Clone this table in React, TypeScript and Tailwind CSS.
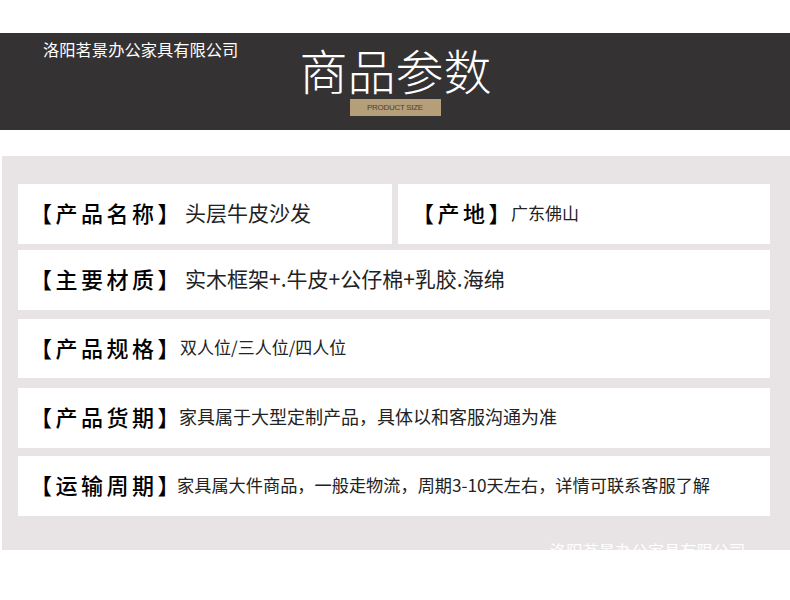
const cjk = "font-['Noto_Sans_CJK_SC','Noto_Sans',sans-serif]"

const label = 'text-[22px] font-medium tracking-[3.5px] text-black'

export default function App() {
  return (
    <div className={`w-[790px] h-[600px] bg-white overflow-hidden ${cjk}`}>
      {/* Header */}
      <div className="mt-[33px] h-[97px] bg-[#353233] relative">
        <p className="absolute left-[43px] top-[4px] text-[16.3px] leading-[24px] text-white">洛阳茗景办公家具有限公司</p>
        <div className="flex flex-col items-center pt-[8px]">
          <h1 className="text-[48px] leading-[56px] font-light text-white ml-[1px]">商品参数</h1>
          <div className="mt-[2px] w-[91px] h-[17px] bg-[#b49f78] flex items-center justify-center">
            <span className="font-['Liberation_Sans',sans-serif] text-[8px] tracking-[-0.3px] text-[#4a4238]">PRODUCT SIZE</span>
          </div>
        </div>
      </div>

      {/* Parameter panel */}
      <div className="mt-[26px] ml-[2px] h-[394px] bg-[#e8e4e5] pt-[28px] pl-[16px] pr-[20px] relative overflow-hidden">
        <div className="flex gap-[6px] h-[60px]">
          <div className="w-[374px] bg-white flex items-center pl-[12px] pb-[3px]">
            <span className={label}>【产品名称】</span>
            <span className="text-[21px] text-[#222] ml-[2px]">头层牛皮沙发</span>
          </div>
          <div className="flex-1 bg-white flex items-center pl-[14px] pb-[3px]">
            <span className={label}>【产地】</span>
            <span className="text-[17px] text-[#222] -ml-[3px]">广东佛山</span>
          </div>
        </div>
        <div className="mt-[6px] h-[60px] bg-white flex items-center pl-[12px] pb-[3px]">
          <span className={label}>【主要材质】</span>
          <span className="text-[21px] text-[#222] ml-[2px]">实木框架+.牛皮+公仔棉+乳胶.海绵</span>
        </div>
        <div className="mt-[9px] h-[59px] bg-white flex items-center pl-[12px] pb-[3px]">
          <span className={label}>【产品规格】</span>
          <span className="text-[17px] text-[#222] -ml-[3px]">双人位/三人位/四人位</span>
        </div>
        <div className="mt-[10px] h-[60px] bg-white flex items-center pl-[12px] pb-[3px]">
          <span className={label}>【产品货期】</span>
          <span className="text-[18px] text-[#222] -ml-[4px]">家具属于大型定制产品，具体以和客服沟通为准</span>
        </div>
        <div className="mt-[8px] h-[60px] bg-white flex items-center pl-[12px] pb-[3px]">
          <span className={label}>【运输周期】</span>
          <span className="text-[17.2px] text-[#222] -ml-[6px]">家具属大件商品，一般走物流，周期3-10天左右，详情可联系客服了解</span>
        </div>
        <p className="absolute left-[548px] top-[382px] text-[16.3px] leading-[24px] text-white">洛阳茗景办公家具有限公司</p>
      </div>
    </div>
  )
}
